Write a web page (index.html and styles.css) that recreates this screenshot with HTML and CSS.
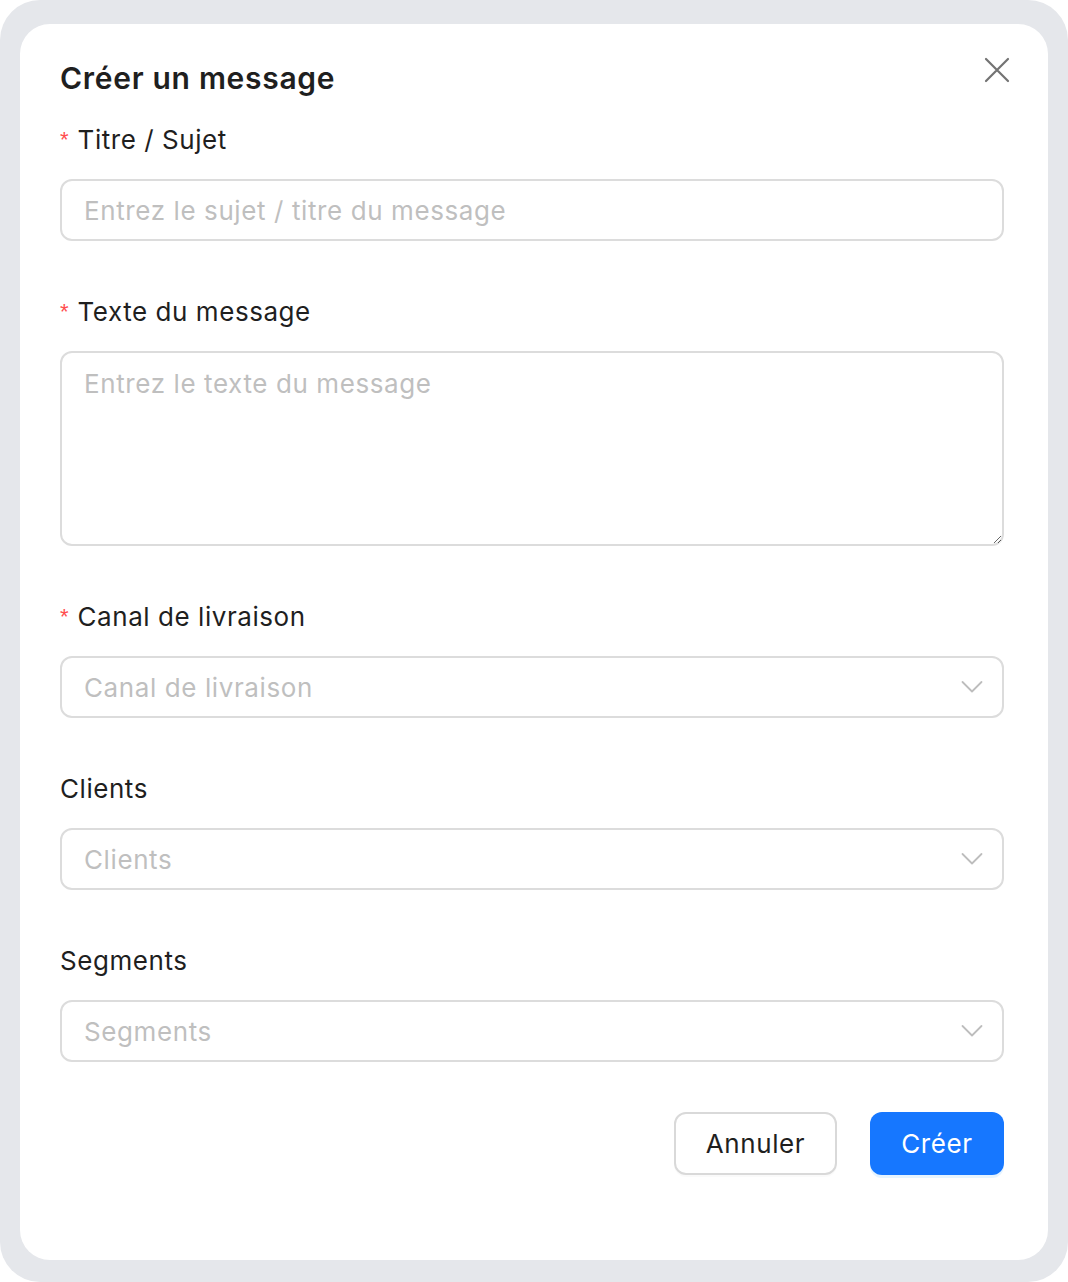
FILE: index.html
```html
<!DOCTYPE html>
<html lang="fr">
<head>
<meta charset="utf-8">
<title>Créer un message</title>
<link rel="stylesheet" href="styles.css">
</head>
<body>
<div class="frame">
  <div class="modal">
    <button class="close" aria-label="Fermer">
      <svg width="26" height="26" viewBox="0 0 26 26"><path d="M2 2 L24 24 M24 2 L2 24" stroke="#737373" stroke-width="2.2" stroke-linecap="round" fill="none"/></svg>
    </button>
    <h1 class="title">Créer un message</h1>
    <form class="form">
      <div class="item">
        <label class="label"><span class="req">*</span>Titre / Sujet</label>
        <input class="input" type="text" placeholder="Entrez le sujet / titre du message">
      </div>
      <div class="item">
        <label class="label"><span class="req">*</span>Texte du message</label>
        <textarea class="textarea" placeholder="Entrez le texte du message"></textarea>
      </div>
      <div class="item">
        <label class="label"><span class="req">*</span>Canal de livraison</label>
        <div class="select"><span class="ph">Canal de livraison</span>
          <svg class="chev" width="22" height="14" viewBox="0 0 22 14"><path d="M1.5 2 L11 11.5 L20.5 2" stroke="#bdbdbd" stroke-width="1.8" fill="none" stroke-linecap="round" stroke-linejoin="round"/></svg>
        </div>
      </div>
      <div class="item">
        <label class="label">Clients</label>
        <div class="select"><span class="ph">Clients</span>
          <svg class="chev" width="22" height="14" viewBox="0 0 22 14"><path d="M1.5 2 L11 11.5 L20.5 2" stroke="#bdbdbd" stroke-width="1.8" fill="none" stroke-linecap="round" stroke-linejoin="round"/></svg>
        </div>
      </div>
      <div class="item">
        <label class="label">Segments</label>
        <div class="select"><span class="ph">Segments</span>
          <svg class="chev" width="22" height="14" viewBox="0 0 22 14"><path d="M1.5 2 L11 11.5 L20.5 2" stroke="#bdbdbd" stroke-width="1.8" fill="none" stroke-linecap="round" stroke-linejoin="round"/></svg>
        </div>
      </div>
      <div class="footer">
        <button type="button" class="btn btn-default">Annuler</button>
        <button type="button" class="btn btn-primary">Créer</button>
      </div>
    </form>
  </div>
</div>
</body>
</html>
```

FILE: styles.css
```css
* { box-sizing: border-box; }
html, body { margin: 0; padding: 0; background: #ffffff; }
body {
  font-family: Inter, "Noto Sans", "Liberation Sans", sans-serif;
  color: #1f1f1f;
}
.frame {
  width: 1068px;
  height: 1282px;
  background: #e5e7eb;
  border-radius: 40px;
  padding: 24px 20px 22px 20px;
}
.modal {
  position: relative;
  background: #ffffff;
  border-radius: 30px;
  height: 100%;
  padding: 34px 44px 0 40px;
}
.close {
  position: absolute;
  top: 33px;
  right: 38px;
  width: 26px;
  height: 26px;
  padding: 0;
  border: 0;
  background: transparent;
  display: flex;
}
.title {
  margin: 0;
  font-size: 30px;
  line-height: 40px;
  font-weight: 600;
  letter-spacing: 0.7px;
  color: #1f1f1f;
}
.form {
  margin-top: 20px;
  display: flex;
  flex-direction: column;
}
.item {
  display: flex;
  flex-direction: column;
  margin-bottom: 49px;
}
.label {
  height: 44px;
  line-height: 44px;
  font-size: 26px;
  font-weight: 400;
  margin-bottom: 17px;
  color: #1f1f1f;
  letter-spacing: 0.55px;
}
.req {
  color: #ff4d4f;
  font-size: 22px;
  margin-right: 9px;
  letter-spacing: 0;
  font-family: "Liberation Sans", sans-serif;
  position: relative;
  top: -2px;
}
.input, .textarea, .select {
  width: 100%;
  border: 2px solid #dcdcdc;
  border-radius: 12px;
  font-family: inherit;
  font-size: 26px;
  color: #1f1f1f;
  background: #ffffff;
  outline: none;
  letter-spacing: 0.6px;
}
.input {
  height: 62px;
  padding: 0 22px;
}
.textarea {
  height: 195px;
  padding: 14px 22px;
  line-height: 34px;
  resize: vertical;
  display: block;
}
.input::placeholder, .textarea::placeholder { color: #bfbfbf; }
.select {
  height: 62px;
  padding: 0 22px 0 22px;
  display: flex;
  align-items: center;
  justify-content: space-between;
}
.ph { color: #bfbfbf; }
.chev { margin-right: -3px; }
.footer {
  margin-top: 1px;
  display: flex;
  justify-content: flex-end;
  gap: 33px;
}
.btn {
  height: 63px;
  border-radius: 12px;
  font-family: inherit;
  font-size: 26px;
  letter-spacing: 0.6px;
  cursor: pointer;
}
.btn-default {
  width: 163px;
  background: #ffffff;
  border: 2px solid #d9d9d9;
  color: #1f1f1f;
  box-shadow: 0 2px 0 rgba(0,0,0,0.02);
}
.btn-primary {
  width: 134px;
  background: #1677ff;
  border: 0;
  color: #ffffff;
  box-shadow: 0 3px 0 rgba(5,145,255,0.1);
}
```
